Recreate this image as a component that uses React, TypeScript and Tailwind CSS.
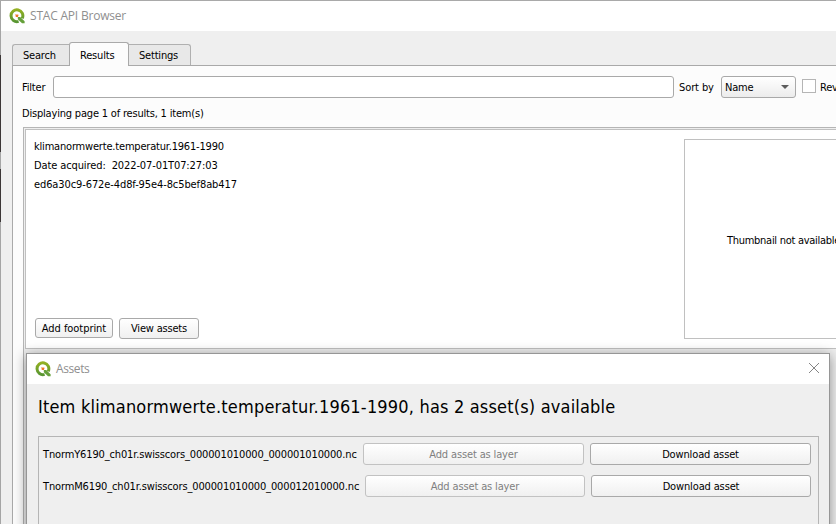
import React from "react";

function Logo() {
  return (
    <svg viewBox="0 0 16 16" className="h-4 w-4 shrink-0">
      <defs>
        <linearGradient id="ring" x1="0" y1="0" x2="0" y2="1">
          <stop offset="0" stopColor="#93b023" />
          <stop offset="1" stopColor="#589632" />
        </linearGradient>
      </defs>
      <path d="M9.6 13.4A5.9 5.9 0 1 1 13.2 10.4" fill="none" stroke="url(#ring)" strokeWidth="3" />
      <path d="M8.8 9H11.2L15.6 13.2V15.2H13L8.8 11.2Z" fill="#65a03a" />
      <path d="M6 6H9L10 7.4L8.4 9.2L6 8.6Z" fill="#f7c596" />
      <path d="M7 7H9V9H7Z" fill="#ee7528" />
    </svg>
  );
}

function Button({ className, disabled, children }: { className: string; disabled?: boolean; children: React.ReactNode }) {
  return (
    <button
      disabled={disabled}
      className={
        "flex shrink-0 items-center justify-center rounded-[3px] border bg-linear-to-b from-white to-[#f0f0f0] whitespace-nowrap " +
        (disabled ? "border-[#c2c2c2] text-[#808080] " : "border-[#a9a9a9] text-black ") +
        className
      }
    >
      {children}
    </button>
  );
}

function AssetsDialog() {
  return (
    <section className="absolute top-[353px] left-[26px] h-[200px] w-[804px] border border-[#969696] bg-[#efefef] shadow-[0_2px_12px_rgba(0,0,0,0.4)]">
      <header className="flex h-[30px] items-center bg-white pr-[9px] pl-2">
        <Logo />
        <span className="ml-[5px] font-['Open_Sans','Noto_Sans',sans-serif] text-[12px] tracking-[-0.4px] text-[#8f8f8f]">Assets</span>
        <svg viewBox="0 0 12 12" className="mb-[2px] ml-auto h-3 w-3">
          <path d="M1 1L11 11M11 1L1 11" stroke="#858585" strokeWidth="1" fill="none" />
        </svg>
      </header>
      <h1 className="mt-[11px] ml-[11px] h-6 text-[18px] leading-6 font-normal tracking-[0.18px] whitespace-nowrap text-black">
        Item klimanormwerte.temperatur.1961-1990, has 2 asset(s) available
      </h1>
      <div className="mt-[17px] ml-[11px] flex h-[130px] w-[781px] flex-col gap-[10px] border border-[#b5b5b5] pt-[6px] pl-1 tracking-[-0.14px]">
        <div className="flex h-[22px] items-center">
          <span className="w-[320px] shrink-0 pt-[2px] whitespace-nowrap">TnormY6190_ch01r.swisscors_000001010000_000001010000.nc</span>
          <Button disabled className="h-[22px] w-[221px] pt-[2px]">Add asset as layer</Button>
          <Button className="ml-[6px] h-[22px] w-[221px] pt-[2px]">Download asset</Button>
        </div>
        <div className="flex h-[22px] items-center">
          <span className="w-[322px] shrink-0 pt-[2px] whitespace-nowrap">TnormM6190_ch01r.swisscors_000001010000_000012010000.nc</span>
          <Button disabled className="h-[22px] w-[220px] pt-[2px]">Add asset as layer</Button>
          <Button className="ml-[6px] h-[22px] w-[220px] pt-[2px]">Download asset</Button>
        </div>
      </div>
    </section>
  );
}

export default function App() {
  return (
    <div className="relative h-[524px] w-[836px] overflow-hidden bg-[#efefef] font-['DejaVu_Sans_Condensed','DejaVu_Sans',sans-serif] text-[11px] tracking-[-0.19px] text-black">
      <div className="flex h-full border-t border-[#a9a9a9]">
        <div className="flex w-px shrink-0 flex-col bg-[#a5a5a5]">
          <div className="mt-[54px] h-[97px] bg-[#3c3737]" />
          <div className="mt-[17px] h-[53px] bg-[#3c3737]" />
        </div>
        <div className="flex min-w-0 flex-1 flex-col">
          <header className="flex h-[30px] shrink-0 items-center bg-white pl-2">
            <Logo />
            <span className="ml-[5px] font-['Open_Sans','Noto_Sans',sans-serif] text-[12px] tracking-[-0.2px] text-[#8f8f8f]">STAC API Browser</span>
          </header>
          <nav className="relative z-10 mt-[11px] -mb-px ml-[11px] flex h-[24px] shrink-0 items-end">
            <div className="mb-px flex h-[21px] w-[57px] items-center rounded-tl-[3px] border-t border-l border-[#b0b0b0] bg-[#e8e8e8] pt-[3px] pl-[10px]">Search</div>
            <div className="flex h-[24px] w-[60px] items-center rounded-t-[3px] border border-b-0 border-[#a9a9a9] bg-[#fcfcfc] pt-[3px] pl-[10px]">Results</div>
            <div className="mb-px flex h-[21px] w-[62px] items-center rounded-tr-[3px] border-t border-r border-[#b0b0b0] bg-[#e8e8e8] pt-[3px] pl-[10px]">Settings</div>
          </nav>
          <main className="ml-[11px] flex min-h-0 flex-1 flex-col border-t border-l border-[#a9a9a9] bg-[#fcfcfc]">
            <div className="mt-[10px] flex h-[22px] shrink-0 items-center whitespace-nowrap">
              <label className="w-[40px] shrink-0 pt-[3px] pl-[9px]">Filter</label>
              <div className="h-[22px] w-[621px] shrink-0 rounded-[3px] border border-[#a9a9a9] bg-white" />
              <span className="w-[47px] shrink-0 pt-[3px] pl-[5px] tracking-[-0.1px]">Sort by</span>
              <div className="flex h-[22px] w-[75px] shrink-0 items-center justify-between rounded-[3px] border border-[#a9a9a9] bg-linear-to-b from-white to-[#ececec] pr-[6px] pl-[3px]">
                <span className="pt-[3px]">Name</span>
                <svg viewBox="0 0 8 4" className="h-1 w-2"><path d="M0 0H8L4 4Z" fill="#5c5c5c" /></svg>
              </div>
              <div className="mb-[2px] ml-[6px] h-[14px] w-[14px] shrink-0 border border-[#b5b5b5] bg-white" />
              <span className="ml-1 pt-[2px]">Reverse order</span>
            </div>
            <p className="mt-[8px] ml-[9px] h-4 shrink-0 leading-4">Displaying page 1 of results, 1 item(s)</p>
            <div className="mt-[5px] ml-[10px] min-h-0 flex-1 border-t border-l border-[#b5b5b5] bg-[#eeeeee] pt-px pl-px">
              <div className="flex h-[220px] justify-between border border-r-0 border-[#c0c0c0] bg-white">
                <div className="flex flex-col pt-[7px] pl-2">
                  <p className="h-[19px] leading-[19px]">klimanormwerte.temperatur.1961-1990</p>
                  <p className="h-[19px] leading-[19px] tracking-[-0.11px]">Date acquired:&nbsp; 2022-07-01T07:27:03</p>
                  <p className="h-[19px] leading-[19px] tracking-[-0.1px]">ed6a30c9-672e-4d8f-95e4-8c5bef8ab417</p>
                  <div className="mt-[124px] ml-px flex gap-[6px]">
                    <Button className="h-5 w-[78px] pt-[2px] tracking-[-0.05px]">Add footprint</Button>
                    <Button className="h-[21px] w-20 pt-[2px]">View assets</Button>
                  </div>
                </div>
                <div className="mt-[9px] flex h-[200px] w-[152px] items-center border border-r-0 border-[#c0c0c0] pt-[4px] pl-[42px] tracking-[-0.28px] whitespace-nowrap">
                  Thumbnail not available
                </div>
              </div>
            </div>
          </main>
        </div>
      </div>
      <AssetsDialog />
    </div>
  );
}
